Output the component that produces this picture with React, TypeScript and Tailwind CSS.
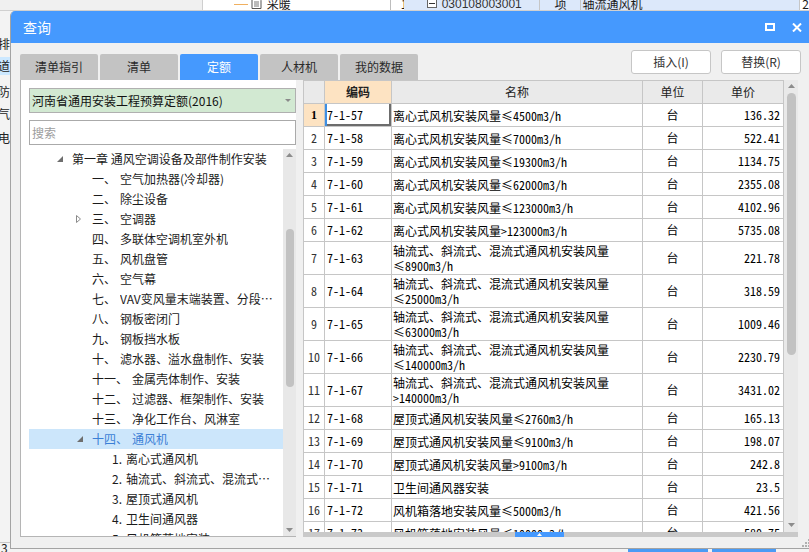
import React from "react";

type TreeItem = {
  level: number;
  num?: string;
  text: string;
  toggle?: "open" | "closed";
  selected?: boolean;
};

const tree: TreeItem[] = [
  { level: 0, text: "第一章 通风空调设备及部件制作安装", toggle: "open" },
  { level: 1, num: "一、", text: "空气加热器(冷却器)" },
  { level: 1, num: "二、", text: "除尘设备" },
  { level: 1, num: "三、", text: "空调器", toggle: "closed" },
  { level: 1, num: "四、", text: "多联体空调机室外机" },
  { level: 1, num: "五、", text: "风机盘管" },
  { level: 1, num: "六、", text: "空气幕" },
  { level: 1, num: "七、", text: "VAV变风量末端装置、分段组装式空调器" },
  { level: 1, num: "八、", text: "钢板密闭门" },
  { level: 1, num: "九、", text: "钢板挡水板" },
  { level: 1, num: "十、", text: "滤水器、溢水盘制作、安装" },
  { level: 1, num: "十一、", text: "金属壳体制作、安装" },
  { level: 1, num: "十二、", text: "过滤器、框架制作、安装" },
  { level: 1, num: "十三、", text: "净化工作台、风淋室" },
  { level: 1, num: "十四、", text: "通风机", toggle: "open", selected: true },
  { level: 2, num: "1.", text: "离心式通风机" },
  { level: 2, num: "2.", text: "轴流式、斜流式、混流式通风机" },
  { level: 2, num: "3.", text: "屋顶式通风机" },
  { level: 2, num: "4.", text: "卫生间通风器" },
  { level: 2, num: "5.", text: "风机箱落地安装" },
];

const indent = ["pl-[23px]", "pl-[43px]", "pl-[63px]"];

type Row = { n: number; code: string; name: string[]; price: string };

const rows: Row[] = [
  { n: 1, code: "7-1-57", name: ["离心式风机安装风量≤4500m3/h"], price: "136.32" },
  { n: 2, code: "7-1-58", name: ["离心式风机安装风量≤7000m3/h"], price: "522.41" },
  { n: 3, code: "7-1-59", name: ["离心式风机安装风量≤19300m3/h"], price: "1134.75" },
  { n: 4, code: "7-1-60", name: ["离心式风机安装风量≤62000m3/h"], price: "2355.08" },
  { n: 5, code: "7-1-61", name: ["离心式风机安装风量≤123000m3/h"], price: "4102.96" },
  { n: 6, code: "7-1-62", name: ["离心式风机安装风量>123000m3/h"], price: "5735.08" },
  { n: 7, code: "7-1-63", name: ["轴流式、斜流式、混流式通风机安装风量", "≤8900m3/h"], price: "221.78" },
  { n: 8, code: "7-1-64", name: ["轴流式、斜流式、混流式通风机安装风量", "≤25000m3/h"], price: "318.59" },
  { n: 9, code: "7-1-65", name: ["轴流式、斜流式、混流式通风机安装风量", "≤63000m3/h"], price: "1009.46" },
  { n: 10, code: "7-1-66", name: ["轴流式、斜流式、混流式通风机安装风量", "≤140000m3/h"], price: "2230.79" },
  { n: 11, code: "7-1-67", name: ["轴流式、斜流式、混流式通风机安装风量", ">140000m3/h"], price: "3431.02" },
  { n: 12, code: "7-1-68", name: ["屋顶式通风机安装风量≤2760m3/h"], price: "165.13" },
  { n: 13, code: "7-1-69", name: ["屋顶式通风机安装风量≤9100m3/h"], price: "198.07" },
  { n: 14, code: "7-1-70", name: ["屋顶式通风机安装风量>9100m3/h"], price: "242.8" },
  { n: 15, code: "7-1-71", name: ["卫生间通风器安装"], price: "23.5" },
  { n: 16, code: "7-1-72", name: ["风机箱落地安装风量≤5000m3/h"], price: "421.56" },
  { n: 17, code: "7-1-73", name: ["风机箱落地安装风量≤10000m3/h"], price: "580.75" },
];

function ArrowUp() {
  return (
    <svg width="7" height="4" viewBox="0 0 7 4">
      <polygon points="0,4 3.5,0 7,4" fill="#8c8c8c" />
    </svg>
  );
}

function ArrowDown() {
  return (
    <svg width="7" height="4" viewBox="0 0 7 4">
      <polygon points="0,0 7,0 3.5,4" fill="#8c8c8c" />
    </svg>
  );
}

function Backdrop() {
  return (
    <>
      {/* main window row peeking above the dialog */}
      <div className="absolute left-0 top-0 flex h-[11px] w-[809px] overflow-hidden border-b border-[#d0d0d0] text-[12px] leading-[12px]">
        <div className="w-[203px] border-r border-[#cfcfcf] bg-[#f0f0f0]" />
        <div className="flex w-[187px] items-start bg-white pl-[31px]">
          <div className="mt-[4px] h-[1px] w-[14px] bg-[#f0b060]" />
          <svg width="11" height="12" viewBox="0 0 11 12" className="-mt-[3px] ml-[3px]">
            <path d="M1 0.5 H7 L10 3.5 V11.5 H1 Z" fill="#fff" stroke="#555" />
            <path d="M3 5 H8 M3 7 H8 M3 9 H8" stroke="#777" />
          </svg>
          <span className="-mt-[2px] ml-[5px]">采暖</span>
        </div>
        <div className="w-[14px] border-l border-[#bdbdbd] bg-white pl-[10px] pt-0">
          <span className="-mt-[2px] block">1</span>
        </div>
        <div className="flex w-[135px] items-start bg-[#dce8fa] pl-[23px]">
          <span className="-mt-[2px] flex h-[10px] w-[10px] items-center justify-center border border-[#666] bg-white">
            <span className="h-[1px] w-[6px] bg-[#333]" />
          </span>
          <span className="-mt-[2px] ml-[5px] font-['Liberation_Sans',sans-serif] text-[#333]">030108003001</span>
        </div>
        <div className="w-[41px] border-l border-[#c6c6c6] bg-[#dce8fa] pl-[15px]">
          <span className="-mt-[2px] block">项</span>
        </div>
        <div className="w-[220px] border-l border-[#c6c6c6] bg-[#dce8fa] pl-[2px]">
          <span className="-mt-[2px] block">轴流通风机</span>
        </div>
        <div className="flex-1 border-l border-[#c6c6c6] bg-white pl-[2px]">
          <span className="-mt-[2px] block">2</span>
        </div>
      </div>

      {/* left side list of the main window */}
      <div className="absolute left-0 top-[11px] flex w-[40px] flex-col text-[12px] leading-[18px] text-[#222]">
        <div className="mt-[24px] h-[18px] -ml-[14px]">给排水</div>
        <div className="mt-[4px] h-[18px] bg-[#cce8ff] pl-0 -ml-[14px] pr-[30px]">通道</div>
        <div className="mt-[8px] h-[18px] -ml-[14px]">消防</div>
        <div className="mt-[4px] h-[18px] -ml-[14px]">电气</div>
        <div className="mt-[6px] h-[18px] -ml-[14px]">弱电</div>
      </div>
      <div className="absolute left-0 top-[542px] h-[1px] w-[12px] bg-[#c8c8c8]" />
      <div className="absolute left-[1px] top-[541px] text-[12px] leading-[14px] text-[#222]">3</div>
      <div className="absolute left-[628px] top-[549px] h-[3px] w-[80px] bg-[#4a9bf5]" />
      <div className="absolute left-[712px] top-[549px] h-[3px] w-[64px] bg-[#4a9bf5]" />
    </>
  );
}

function TitleBar() {
  return (
    <div className="flex h-[32px] shrink-0 items-center bg-[#4599fe] pl-[12px] pr-[10px] text-white">
      <span className="text-[14px]">查询</span>
      <div className="ml-auto flex items-center gap-[17px]">
        <svg width="10" height="8" viewBox="0 0 10 8">
          <rect x="1" y="1" width="8" height="6" fill="none" stroke="#fff" strokeWidth="2" />
        </svg>
        <svg width="10" height="9" viewBox="0 0 10 9">
          <path d="M1 0.5 L9 8.5 M9 0.5 L1 8.5" stroke="#fff" strokeWidth="2" />
        </svg>
      </div>
    </div>
  );
}

function Toggle({ kind }: { kind?: "open" | "closed" }) {
  if (kind === "open")
    return (
      <svg width="6" height="6" viewBox="0 0 6 6" className="ml-[5px]">
        <polygon points="6,0 6,6 0,6" fill="#6e6e6e" />
      </svg>
    );
  if (kind === "closed")
    return (
      <svg width="5" height="8" viewBox="0 0 5 8" className="ml-[4px]">
        <polygon points="0.5,0.5 4.5,4 0.5,7.5" fill="#fff" stroke="#8a8a8a" />
      </svg>
    );
  return null;
}

function LeftPanel() {
  return (
    <div className="ml-[9px] flex w-[276px] shrink-0 flex-col border-b border-l border-[#b5b5b5] bg-white pl-[8px] pt-[8px]">
      <div className="flex h-[25px] shrink-0 items-center border border-[#b0b0b0] bg-[#d2e9d2] pl-[2px] pr-[4px] text-[12px] text-[#111]">
        河南省通用安装工程预算定额(2016)
        <svg width="6" height="3" viewBox="0 0 6 3" className="ml-auto">
          <polygon points="0,0 6,0 3,3" fill="#8a8a8a" />
        </svg>
      </div>
      <div className="mt-[7px] flex h-[25px] shrink-0 items-center border border-[#aaaaaa] bg-white pl-[2px] text-[12px] text-[#9d9d9d]">
        搜索
      </div>
      <div className="mt-[4px] flex min-h-0 flex-1">
        <div className="min-w-0 flex-1 overflow-hidden">
          {tree.map((it, i) => (
            <div
              key={i}
              className={`flex h-[20px] items-center pr-[7px] text-[12px] ${indent[it.level]} ${
                it.selected ? "bg-[#cce6fb] text-[#3b7fd6]" : "text-[#1b1b1b]"
              }`}
            >
              <span className="flex w-[20px] shrink-0 items-center">
                <Toggle kind={it.toggle} />
              </span>
              {it.num && <span className="shrink-0">{it.num}</span>}
              <span className={`truncate ${it.num ? "ml-[4px]" : ""}`}>{it.text}</span>
            </div>
          ))}
        </div>
        <div className="flex w-[13px] shrink-0 flex-col items-center bg-[#e8e8e8]">
          <div className="flex h-[12px] items-center">
            <ArrowUp />
          </div>
          <div className="mt-[68px] h-[158px] w-[8px] rounded-full bg-[#c2c2c2]" />
          <div className="flex-1" />
          <div className="flex h-[12px] items-center">
            <ArrowDown />
          </div>
        </div>
      </div>
    </div>
  );
}

const cell = "border-r border-b border-[#c6c6c6]";

function Table() {
  return (
    <div className="flex w-[495px] shrink-0 flex-col">
      <div className="flex min-h-0 flex-1">
        <div className="w-[481px] shrink-0 overflow-hidden border-l border-t border-[#c6c6c6] bg-white">
          <div className="flex h-[23px] bg-[#eaeaea] text-[12px] text-[#222]">
            <div className={`w-[21px] ${cell}`} />
            <div className={`flex w-[67px] items-center justify-center bg-[#fde3c2] font-bold ${cell}`}>编码</div>
            <div className={`flex w-[251px] items-center justify-center ${cell}`}>名称</div>
            <div className={`flex w-[60px] items-center justify-center ${cell}`}>单位</div>
            <div className={`flex w-[81px] items-center justify-center ${cell}`}>单价</div>
          </div>
          {rows.map((r) => (
            <div
              key={r.n}
              className={`flex font-['Noto_Sans_Mono_CJK_SC','Noto_Sans_CJK_SC',monospace] text-[12px] text-black ${
                r.name.length > 1 ? "h-[33px]" : "h-[23px]"
              }`}
            >
              <div
                className={`flex w-[21px] shrink-0 items-center justify-center ${cell} ${
                  r.n === 1 ? "bg-[#fde3c2] font-['Liberation_Serif',serif] font-bold" : "text-[#333]"
                }`}
              >
                {r.n}
              </div>
              <div
                className={`flex w-[67px] shrink-0 items-center pl-[2px] ${cell} ${
                  r.n === 1 ? "shadow-[inset_2px_0_0_#3d8fe3,inset_-2px_-2px_0_#6c6c6c]" : ""
                }`}
              >
                {r.code}
              </div>
              <div className={`flex w-[251px] shrink-0 flex-col justify-center pl-[1px] leading-[15px] ${cell}`}>
                {r.name.map((l, i) => (
                  <span key={i} className="whitespace-nowrap">
                    {l}
                  </span>
                ))}
              </div>
              <div className={`flex w-[60px] shrink-0 items-center justify-center ${cell}`}>台</div>
              <div className={`flex w-[81px] shrink-0 items-center justify-end pr-[3px] ${cell}`}>{r.price}</div>
            </div>
          ))}
        </div>
        <div className="flex w-[14px] shrink-0 flex-col items-center bg-[#e9e9e9]">
          <div className="flex h-[12px] items-center">
            <ArrowUp />
          </div>
          <div className="mt-[1px] h-[262px] w-[9px] rounded-full bg-[#c2c2c2]" />
          <div className="flex-1" />
          <div className="flex h-[14px] items-center">
            <ArrowDown />
          </div>
        </div>
      </div>
      <div className="flex h-[5px] shrink-0 justify-center bg-[#c9c9c9]">
        <div className="ml-[-23px] flex w-[49px] items-center justify-center bg-[#4599fe]">
          <svg width="5" height="3" viewBox="0 0 5 3">
            <polygon points="0,3 2.5,0 5,3" fill="#fff" />
          </svg>
        </div>
      </div>
    </div>
  );
}

export default function App() {
  return (
    <div className="relative h-[552px] w-[809px] overflow-hidden bg-[#f3f3f3] font-['Microsoft_YaHei','Noto_Sans_CJK_SC',sans-serif] text-[12px] text-[#1a1a1a]">
      <Backdrop />
      <div className="absolute left-[10px] top-[11px] flex h-[538px] w-[802px] flex-col overflow-hidden rounded-tl-[5px] border-b border-l border-[#a3a3a3] bg-[#f0f0f0]">
        <TitleBar />
        <div className="flex h-[37px] shrink-0 items-start">
          <div className="ml-[9px] mt-[11px] flex h-[26px] gap-[2px]">
            {["清单指引", "清单", "定额", "人材机", "我的数据"].map((t) => (
              <div
                key={t}
                className={`flex w-[78px] items-center justify-center rounded-t-[2px] text-[12px] ${
                  t === "定额" ? "bg-[#4599fe] text-white" : "bg-[#c3c3c3] text-[#2a2a2a]"
                }`}
              >
                {t}
              </div>
            ))}
          </div>
          <div className="ml-auto mr-[11px] mt-[7px] flex gap-[10px]">
            <button className="flex h-[24px] w-[80px] items-center justify-center rounded-[3px] border border-[#c6c6c6] bg-white text-[12px] text-[#333]">
              插入(I)
            </button>
            <button className="flex h-[24px] w-[80px] items-center justify-center rounded-[3px] border border-[#c6c6c6] bg-white text-[12px] text-[#333]">
              替换(R)
            </button>
          </div>
        </div>
        <div className="flex h-[457px] shrink-0 gap-[7px]">
          <LeftPanel />
          <Table />
        </div>
        <div className="flex flex-1 justify-end pr-[13px] pt-[1px]">
          <svg width="9" height="9" viewBox="0 0 9 9" className="mr-[-11px] ml-auto">
            <rect x="7" y="1" width="2" height="2" fill="#b0b0b0" />
            <rect x="4" y="4" width="2" height="2" fill="#b0b0b0" />
            <rect x="7" y="4" width="2" height="2" fill="#b0b0b0" />
            <rect x="1" y="7" width="2" height="2" fill="#b0b0b0" />
            <rect x="4" y="7" width="2" height="2" fill="#b0b0b0" />
            <rect x="7" y="7" width="2" height="2" fill="#b0b0b0" />
          </svg>
        </div>
      </div>
    </div>
  );
}
